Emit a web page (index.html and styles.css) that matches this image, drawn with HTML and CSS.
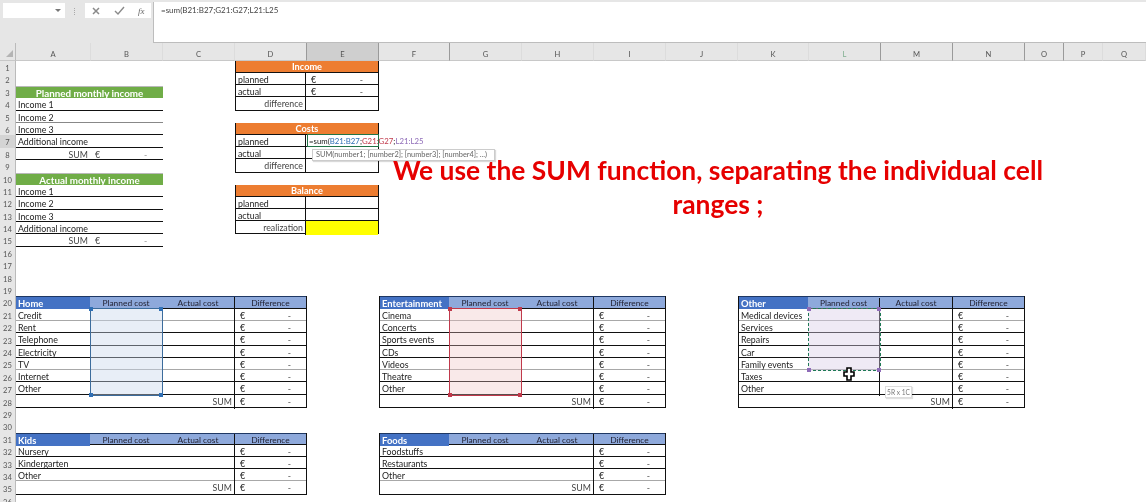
FILE: index.html
```html
<!DOCTYPE html>
<html lang="en">
<head>
  <meta charset="UTF-8" />
  <title>Budget - Book1</title>
  <link rel="stylesheet" href="styles.css">
</head>
<body>
<div class="page">

  <div class="formula-bar">
    <div class="bar-left">
      <div class="name-box"><span class="arrow"></span></div>
      <span class="grip"></span>
      <div class="bar-buttons">
        <svg width="10" height="10" viewBox="0 0 10 10"><path d="M2 2l6 6M8 2l-6 6" stroke="#8a8a8a" stroke-width="1.5" fill="none"/></svg>
        <svg width="11" height="10" viewBox="0 0 11 10"><path d="M1 5l3 3 6-7" stroke="#8a8a8a" stroke-width="1.4" fill="none"/></svg>
        <span class="fx">fx</span>
      </div>
    </div>
    <div class="formula-input">=sum(B21:B27;G21:G27;L21:L25</div>
  </div>

  <div class="sheet">
    <!-- column headers -->
    <div class="corner"><span></span></div>
    <div class="col">A</div><div class="col">B</div><div class="col">C</div>
    <div class="col dark">D</div><div class="col dark active">E</div><div class="col dark">F</div>
    <div class="col">G</div><div class="col">H</div><div class="col">I</div><div class="col">J</div>
    <div class="col">K</div><div class="col dark pick">L</div><div class="col dark">M</div>
    <div class="col dark">N</div><div class="col dark">O</div><div class="col">P</div><div class="col">Q</div>

    <!-- row headers -->
    <div class="rows">
      <div>1</div><div>2</div><div>3</div><div>4</div><div>5</div><div>6</div>
      <div class="active">7</div><div>8</div><div>9</div><div>10</div><div>11</div><div>12</div>
      <div>13</div><div>14</div><div>15</div><div>16</div><div>17</div><div>18</div>
      <div>19</div><div>20</div><div>21</div><div>22</div><div>23</div><div>24</div>
      <div>25</div><div>26</div><div>27</div><div>28</div><div>29</div><div>30</div>
      <div>31</div><div>32</div><div>33</div><div>34</div><div>35</div><div>36</div>
    </div>

    <!-- monthly income -->
    <div class="block income-planned">
      <div class="green-head">Planned monthly income</div>
      <div class="line">Income 1</div>
      <div class="line soft">Income 2</div>
      <div class="line">Income 3</div>
      <div class="line">Additional income</div>
      <div class="line total"><span>SUM</span><span>€</span><span>-</span></div>
    </div>
    <div class="block income-actual">
      <div class="green-head">Actual monthly income</div>
      <div class="line">Income 1</div>
      <div class="line">Income 2</div>
      <div class="line">Income 3</div>
      <div class="line">Additional income</div>
      <div class="line total"><span>SUM</span><span>€</span><span>-</span></div>
    </div>

    <!-- summary boxes -->
    <div class="block box box-income">
      <div class="orange-head">Income</div>
      <div class="box-row"><span>planned</span><span class="money"><b>€</b><b>-</b></span></div>
      <div class="box-row"><span>actual</span><span class="money"><b>€</b><b>-</b></span></div>
      <div class="box-row"><span class="right">difference</span><span></span></div>
    </div>
    <div class="block box box-costs">
      <div class="orange-head">Costs</div>
      <div class="box-row"><span>planned</span><span></span></div>
      <div class="box-row"><span>actual</span><span></span></div>
      <div class="box-row"><span class="right">difference</span><span></span></div>
    </div>
    <div class="block box box-balance">
      <div class="orange-head">Balance</div>
      <div class="box-row"><span>planned</span><span></span></div>
      <div class="box-row"><span>actual</span><span></span></div>
      <div class="box-row"><span class="right">realization</span><span class="yellow"></span></div>
    </div>

    <!-- cost tables -->
    <div class="block cost t-home">
      <div class="cost-row head"><span>Home</span><span>Planned cost</span><span>Actual cost</span><span>Difference</span></div>
      <div class="cost-row soft"><span>Credit</span><i></i><i></i><span class="money"><b>€</b><b>-</b></span></div>
      <div class="cost-row"><span>Rent</span><i></i><i></i><span class="money"><b>€</b><b>-</b></span></div>
      <div class="cost-row"><span>Telephone</span><i></i><i></i><span class="money"><b>€</b><b>-</b></span></div>
      <div class="cost-row"><span>Electricity</span><i></i><i></i><span class="money"><b>€</b><b>-</b></span></div>
      <div class="cost-row soft"><span>TV</span><i></i><i></i><span class="money"><b>€</b><b>-</b></span></div>
      <div class="cost-row"><span>Internet</span><i></i><i></i><span class="money"><b>€</b><b>-</b></span></div>
      <div class="cost-row"><span>Other</span><i></i><i></i><span class="money"><b>€</b><b>-</b></span></div>
      <div class="cost-row sum"><span>SUM</span><span class="money"><b>€</b><b>-</b></span></div>
    </div>
    <div class="block cost t-fun">
      <div class="cost-row head"><span>Entertainment</span><span>Planned cost</span><span>Actual cost</span><span>Difference</span></div>
      <div class="cost-row soft"><span>Cinema</span><i></i><i></i><span class="money"><b>€</b><b>-</b></span></div>
      <div class="cost-row"><span>Concerts</span><i></i><i></i><span class="money"><b>€</b><b>-</b></span></div>
      <div class="cost-row"><span>Sports events</span><i></i><i></i><span class="money"><b>€</b><b>-</b></span></div>
      <div class="cost-row"><span>CDs</span><i></i><i></i><span class="money"><b>€</b><b>-</b></span></div>
      <div class="cost-row soft"><span>Videos</span><i></i><i></i><span class="money"><b>€</b><b>-</b></span></div>
      <div class="cost-row"><span>Theatre</span><i></i><i></i><span class="money"><b>€</b><b>-</b></span></div>
      <div class="cost-row"><span>Other</span><i></i><i></i><span class="money"><b>€</b><b>-</b></span></div>
      <div class="cost-row sum"><span>SUM</span><span class="money"><b>€</b><b>-</b></span></div>
    </div>
    <div class="block cost t-other split">
      <div class="cost-row head"><span>Other</span><span>Planned cost</span><span>Actual cost</span><span>Difference</span></div>
      <div class="cost-row soft"><span>Medical devices</span><i></i><i></i><span class="money"><b>€</b><b>-</b></span></div>
      <div class="cost-row"><span>Services</span><i></i><i></i><span class="money"><b>€</b><b>-</b></span></div>
      <div class="cost-row"><span>Repairs</span><i></i><i></i><span class="money"><b>€</b><b>-</b></span></div>
      <div class="cost-row"><span>Car</span><i></i><i></i><span class="money"><b>€</b><b>-</b></span></div>
      <div class="cost-row soft"><span>Family events</span><i></i><i></i><span class="money"><b>€</b><b>-</b></span></div>
      <div class="cost-row"><span>Taxes</span><i></i><i></i><span class="money"><b>€</b><b>-</b></span></div>
      <div class="cost-row"><span>Other</span><i></i><i></i><span class="money"><b>€</b><b>-</b></span></div>
      <div class="cost-row sum"><span>SUM</span><span class="money"><b>€</b><b>-</b></span></div>
    </div>
    <div class="block cost t-kids">
      <div class="cost-row head"><span>Kids</span><span>Planned cost</span><span>Actual cost</span><span>Difference</span></div>
      <div class="cost-row"><span>Nursery</span><i></i><i></i><span class="money"><b>€</b><b>-</b></span></div>
      <div class="cost-row"><span>Kindergarten</span><i></i><i></i><span class="money"><b>€</b><b>-</b></span></div>
      <div class="cost-row soft"><span>Other</span><i></i><i></i><span class="money"><b>€</b><b>-</b></span></div>
      <div class="cost-row sum"><span>SUM</span><span class="money"><b>€</b><b>-</b></span></div>
    </div>
    <div class="block cost t-foods">
      <div class="cost-row head"><span>Foods</span><span>Planned cost</span><span>Actual cost</span><span>Difference</span></div>
      <div class="cost-row"><span>Foodstuffs</span><i></i><i></i><span class="money"><b>€</b><b>-</b></span></div>
      <div class="cost-row"><span>Restaurants</span><i></i><i></i><span class="money"><b>€</b><b>-</b></span></div>
      <div class="cost-row soft"><span>Other</span><i></i><i></i><span class="money"><b>€</b><b>-</b></span></div>
      <div class="cost-row sum"><span>SUM</span><span class="money"><b>€</b><b>-</b></span></div>
    </div>

    <!-- range highlights from the formula -->
    <div class="range range-blue"></div>
    <div class="range range-red"></div>
    <div class="range range-purple"></div>

    <!-- cell being edited -->
    <div class="editor">=sum(<em class="c-blue">B21:B27</em>;<em class="c-red">G21:G27</em>;<em class="c-purple">L21:L25</em></div>
    <div class="hint">SUM(number1; [number2]; [number3]; [number4]; ...)</div>
    <div class="size-tip">5R x 1C</div>
  </div>

  <svg class="cursor" width="12" height="14" viewBox="0 0 12 14"><path d="M4 1h4v4h3v4H8v4H4V9H1V5h3z" fill="#fff" stroke="#000" stroke-width="1.6"/></svg>

  <p class="note">We use the SUM function, separating the individual cell ranges ;</p>
</div>
</body>
</html>
```
FILE: styles.css
```css
html, body {
  margin: 0;
  height: 502px;
  overflow: hidden;
  background: #fff;
}

.page {
  position: relative;
  width: 1146px;
  height: 502px;
  overflow: hidden;
  font-family: Lato, "Open Sans", sans-serif;
  font-size: 8.8px;
  color: #222;
  filter: blur(0.3px);
}

/* formula bar */
.formula-bar {
  display: flex;
  height: 43px;
  box-sizing: border-box;
  background: #e6e6e6;
  padding-top: 2px;
}

.bar-left {
  display: flex;
  align-items: flex-start;
  width: 153px;
  padding: 1px 0 0 3px;
  box-sizing: border-box;
}

.name-box {
  position: relative;
  width: 62px;
  height: 15px;
  background: #fff;
}

.arrow {
  position: absolute;
  right: 4px;
  top: 6px;
  border: 3px solid transparent;
  border-top: 3px solid #777;
}

.grip {
  width: 1px;
  height: 7px;
  margin: 5px 9px 0 9px;
  border-left: 1px dotted #aaa;
}

.bar-buttons {
  display: flex;
  align-items: center;
  justify-content: space-around;
  width: 66px;
  height: 15px;
  background: #fff;
}

.fx {
  font-family: "Liberation Serif", serif;
  font-style: italic;
  font-size: 9px;
  color: #666;
}

.formula-input {
  flex: 1;
  background: #fff;
  border-left: 1px solid #bdbdbd;
  border-bottom: 1px solid #bdbdbd;
  padding: 3px 0 0 7px;
  font-size: 8px;
  color: #444;
}

/* sheet */
.sheet {
  display: grid;
  grid-template-columns: 16px 75px 72px 72px 72px 72px 71px 72px 72px 72px 72px 71px 72px 72px 72px 39px 39px 43px;
  grid-template-rows: 18px repeat(36, 12.4px);
}

.corner {
  background: #e6e6e6;
  border-right: 1px solid #bbb;
  border-bottom: 1px solid #c8c8c8;
  box-sizing: border-box;
  display: flex;
  justify-content: flex-end;
  align-items: flex-end;
  padding: 0 2px 3px 0;
}

.corner span {
  border-left: 7px solid transparent;
  border-bottom: 7px solid #b4b4b4;
}

.col {
  background: #e6e6e6;
  border-bottom: 1px solid #c8c8c8;
  border-right: 1px solid #dcdcdc;
  box-sizing: border-box;
  padding-top: 6px;
  text-align: center;
  color: #555;
  font-size: 7.6px;
}

.col.dark {
  border-right-color: #9a9a9a;
}

.col.active {
  background: #cfcfcf;
}

.col.pick {
  color: #7fae8f;
}

.rows {
  grid-column: 1;
  grid-row: 2 / span 36;
  display: grid;
  grid-template-rows: subgrid;
  background: #e6e6e6;
  border-right: 1px solid #bbb;
  text-align: center;
  color: #555;
  font-size: 7.6px;
  line-height: 14px;
}

.rows .active {
  background: #d4d4d4;
}

.block {
  display: grid;
  grid-auto-rows: minmax(0, 1fr);
  min-height: 0;
  line-height: 14px;
}

/* income lists */
.income-planned { grid-column: 2 / 4; grid-row: 4 / 10; }
.income-actual { grid-column: 2 / 4; grid-row: 11 / 17; }

.green-head {
  background: #70ad47;
  color: #fff;
  font-size: 9.8px;
  line-height: 12px;
  font-weight: 700;
  text-align: center;
  border-top: 1px solid #b9b9b9;
}

.line {
  padding-left: 2px;
  border-bottom: 1px solid #111;
  white-space: nowrap;
}

.line.soft {
  border-bottom-color: #888;
}

.total {
  display: grid;
  grid-template-columns: 72px 54px 1fr;
  padding: 0;
  color: #444;
}

.total span:first-child {
  text-align: right;
  padding-right: 0;
}

.total span:nth-child(2) {
  padding-left: 7px;
}

.total span:last-child {
  padding-left: 2px;
  color: #999;
}

/* summary boxes */
.box {
  grid-column: 5 / 7;
  border: 1px solid #111;
  border-top: 0;
}

.box-income { grid-row: 2 / 6; }
.box-costs { grid-row: 7 / 11; }
.box-balance { grid-row: 12 / 16; }

.orange-head {
  background: #ed7d31;
  color: #fff;
  font-size: 9.2px;
  line-height: 12px;
  font-weight: 700;
  text-align: center;
  border-bottom: 1px solid #111;
}

.box-row {
  display: grid;
  grid-template-columns: 1fr 72px;
  border-bottom: 1px solid #111;
}

.box-row:last-child {
  border-bottom: 0;
}

.box-row > span:first-child {
  padding-left: 2px;
  border-right: 1px solid #111;
}

.box-row .right {
  text-align: right;
  padding-right: 2px;
  color: #444;
}

.yellow {
  background: #ffff00;
}

.money {
  display: flex;
  justify-content: space-between;
  padding: 0 15px 0 5px;
}

.money b {
  font-weight: 400;
}

.money b:last-child {
  color: #555;
}

/* cost tables */
.cost {
  border-right: 1px solid #111;
  border-bottom: 1px solid #111;
}

.cost.t-home, .cost.t-kids { border-left: 0; }
.cost.t-fun, .cost.t-foods, .cost.t-other { border-left: 1px solid #111; }

.t-home { grid-column: 2 / 6; grid-row: 21 / 30; }
.t-fun { grid-column: 7 / 11; grid-row: 21 / 30; }
.t-other { grid-column: 12 / 16; grid-row: 21 / 30; }
.t-kids { grid-column: 2 / 6; grid-row: 32 / 37; }
.t-foods { grid-column: 7 / 11; grid-row: 32 / 37; }

.cost-row {
  display: grid;
  grid-template-columns: 1fr 72px 72px 72px;
  border-bottom: 1px solid #111;
}

.cost-row:last-child {
  border-bottom: 0;
}

.cost-row.soft {
  border-bottom-color: #a8a8a8;
}

.cost-row > span:first-child {
  padding-left: 2px;
  white-space: nowrap;
}

.cost-row > .money {
  border-left: 1px solid #111;
}

.cost-row.head {
  background: #8ea9db;
  border-top: 1px solid #1f3864;
  text-align: center;
  color: #223;
  font-size: 8.4px;
  line-height: 11px;
  padding-top: 1px;
}

.cost-row.head > span:first-child {
  background: #4472c4;
  color: #fff;
  font-size: 9.4px;
  font-weight: 700;
  text-align: left;
  margin-top: -1px;
  padding-top: 1px;
}

.cost-row.head > span:last-child {
  border-left: 1px solid #111;
  margin-top: -1px;
  padding-top: 1px;
}

.cost-row.sum {
  grid-template-columns: 1fr 72px;
}

.cost-row.sum > span:first-child {
  text-align: right;
  padding-right: 2px;
  color: #444;
}

.split .cost-row > i:nth-of-type(1),
.split .cost-row.head > span:nth-child(2) {
  border-right: 1px solid #111;
}

/* formula ranges */
.range {
  position: relative;
  z-index: 2;
  box-sizing: border-box;
  margin: -1px 0 0 -1px;
  width: 73px;
}

.range::before, .range::after {
  content: "";
  position: absolute;
  width: 4px;
  height: 4px;
  background: var(--mark);
}

.range::before {
  left: -2px;
  top: -2px;
  box-shadow: 70px 0 var(--mark);
}

.range::after {
  left: -2px;
  bottom: -2px;
  box-shadow: 70px 0 var(--mark);
}

.range-blue {
  --mark: #2f6fb5;
  grid-column: 3;
  grid-row: 22 / 29;
  background: rgba(200, 214, 236, 0.42);
  border: 1px solid #3c6c9c;
}

.range-red {
  --mark: #c0394b;
  grid-column: 8;
  grid-row: 22 / 29;
  background: rgba(238, 190, 190, 0.34);
  border: 1px solid #c0394b;
}

.range-purple {
  --mark: #8e6bb8;
  grid-column: 13;
  grid-row: 22 / 27;
  background: rgba(216, 204, 232, 0.42);
  border: 1px dashed #1f7a55;
}

/* cell editor */
.editor {
  position: relative;
  z-index: 3;
  grid-column: 6;
  grid-row: 8;
  box-sizing: border-box;
  height: 13px;
  margin-top: -1px;
  padding-left: 1px;
  background: #fff;
  border: 1px solid #217346;
  line-height: 13px;
  font-size: 7.8px;
  white-space: nowrap;
}

.editor em {
  font-style: normal;
}

.c-blue { color: #2f6fb5; }
.c-red { color: #c0394b; }
.c-purple { color: #8e6bb8; }

.hint {
  position: relative;
  z-index: 4;
  grid-column: 6 / span 4;
  grid-row: 9;
  justify-self: start;
  box-sizing: border-box;
  width: 183px;
  height: 12px;
  margin: 1px 0 0 5px;
  padding-left: 3px;
  background: #fff;
  border: 1px solid #ccc;
  box-shadow: 1px 1px 1px rgba(0, 0, 0, 0.15);
  font-size: 7.4px;
  line-height: 10px;
  color: #666;
  white-space: nowrap;
}

.size-tip {
  position: relative;
  z-index: 4;
  grid-column: 14;
  grid-row: 28 / span 2;
  justify-self: start;
  box-sizing: border-box;
  width: 27px;
  height: 12px;
  margin: 3px 0 0 4px;
  text-align: center;
  background: #fff;
  border: 1px solid #ddd;
  box-shadow: 1px 1px 1px rgba(0, 0, 0, 0.12);
  font-size: 6.6px;
  line-height: 10px;
  color: #777;
  white-space: nowrap;
}

.cursor {
  position: absolute;
  left: 843px;
  top: 367px;
  z-index: 5;
}

/* caption laid over the sheet */
.note {
  position: absolute;
  left: 378px;
  top: 153px;
  z-index: 6;
  width: 680px;
  margin: 0;
  text-align: center;
  font-size: 26.4px;
  line-height: 34px;
  font-weight: 700;
  color: #e60000;
}
```
